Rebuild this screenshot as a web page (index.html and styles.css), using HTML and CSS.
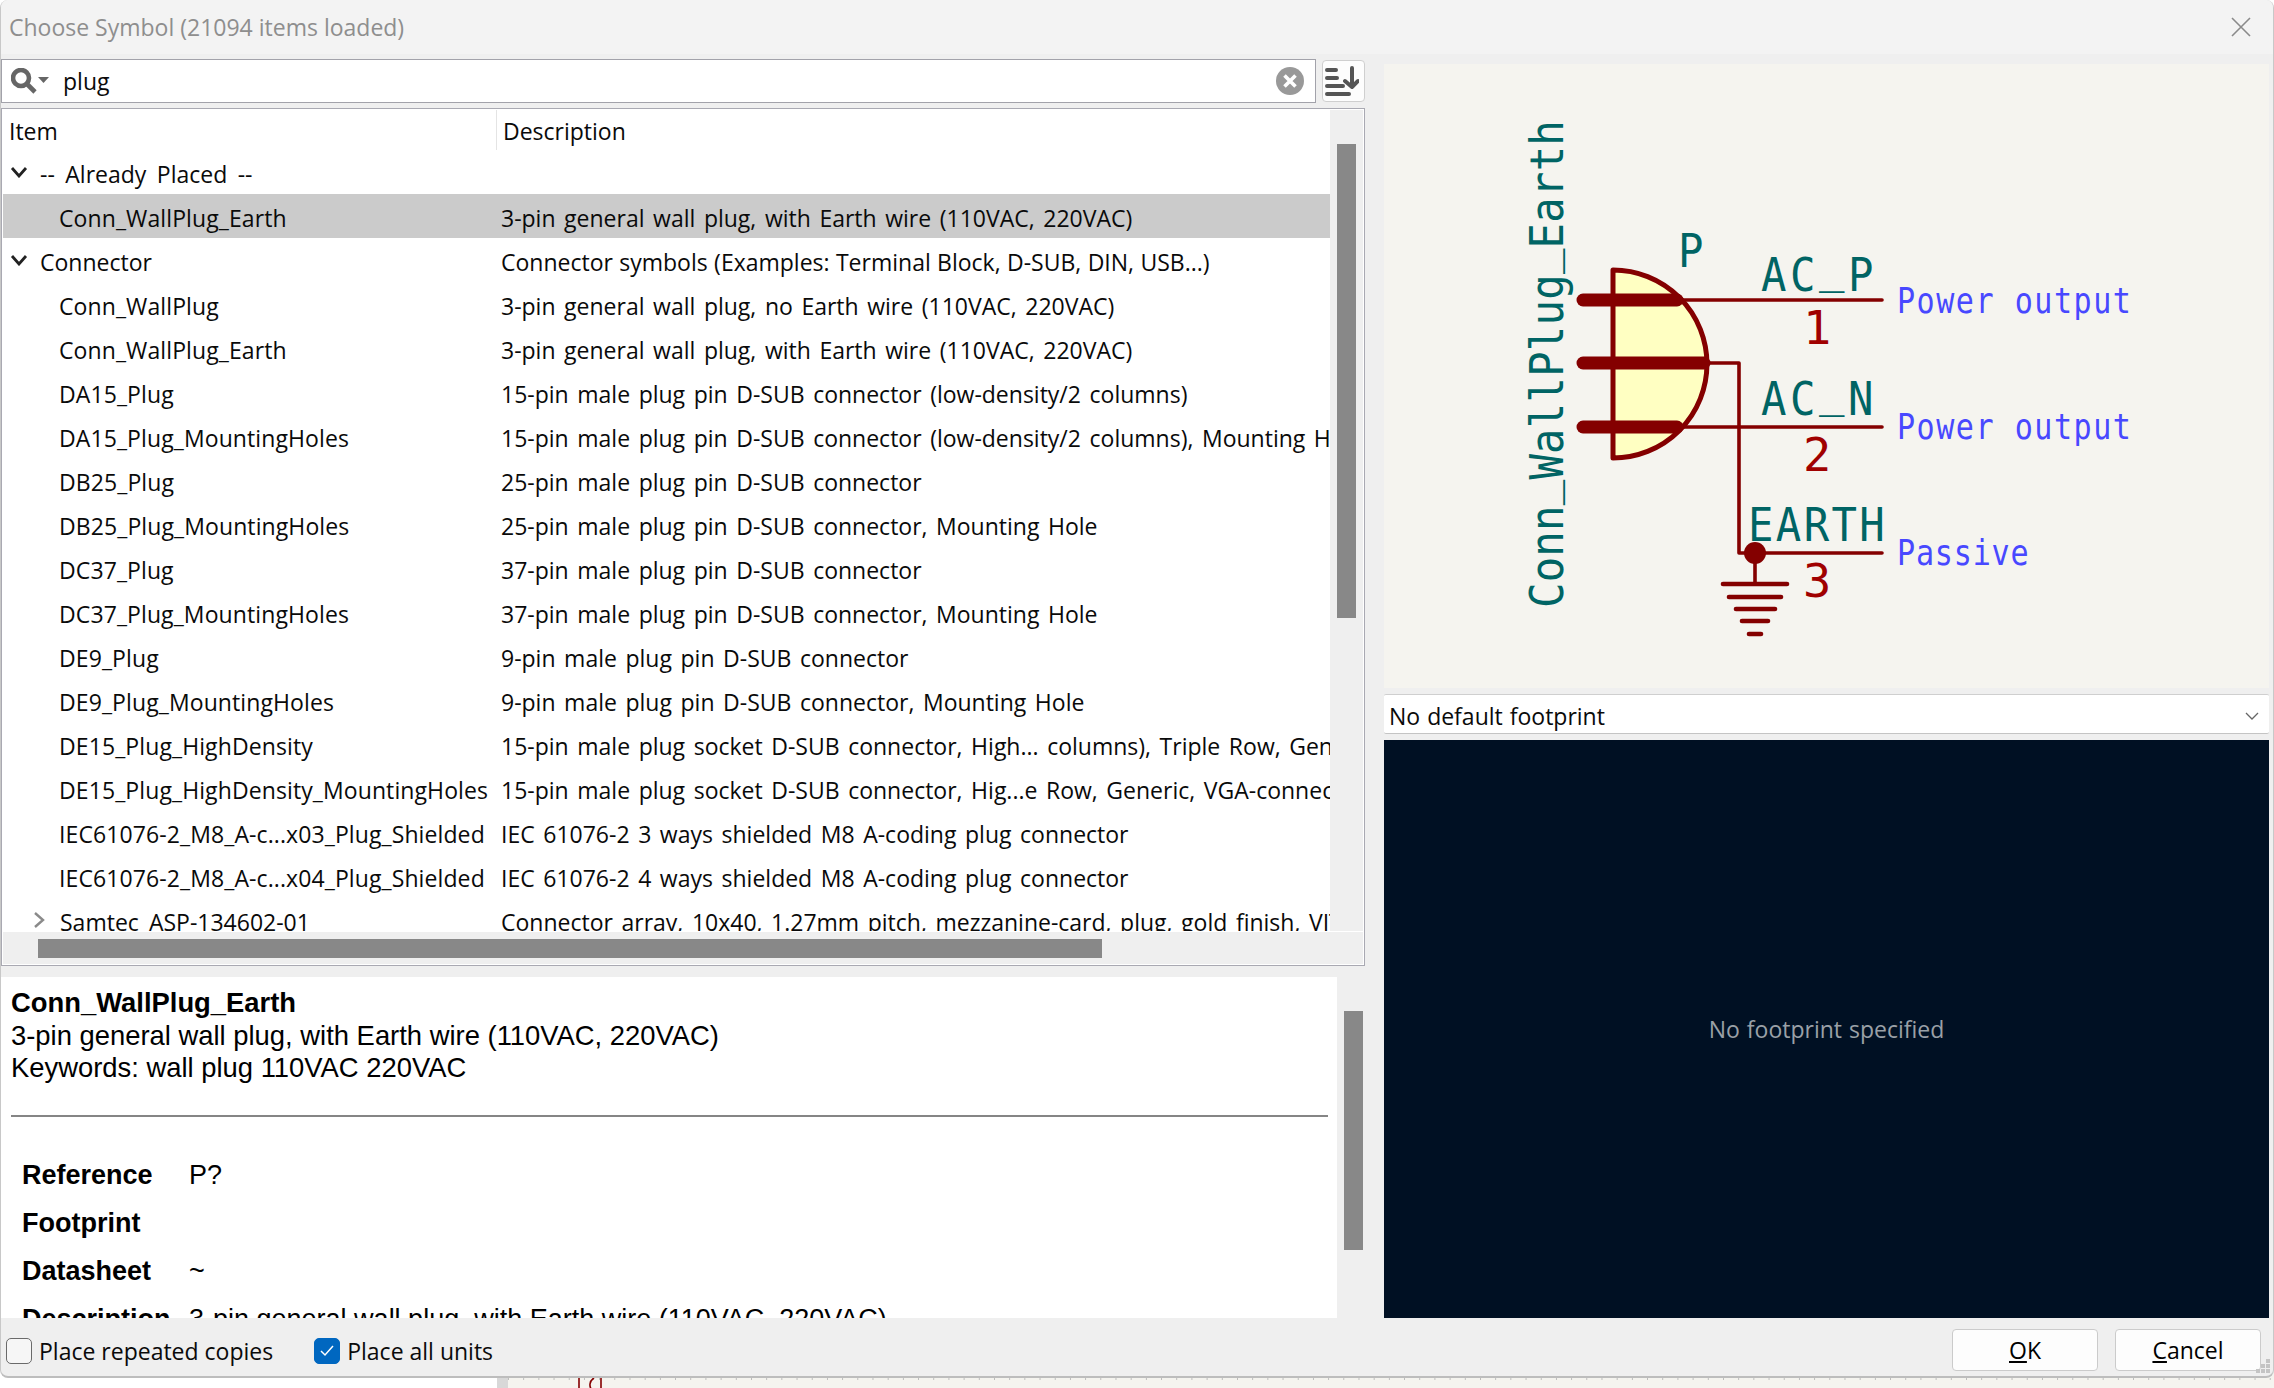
FILE: index.html
```html
<!DOCTYPE html>
<html lang="en">
<head>
<meta charset="utf-8">
<title>Choose Symbol</title>
<link rel="stylesheet" href="styles.css">
</head>
<body>
<div class="dialog">
  <header class="titlebar">
    <span class="title">Choose Symbol (21094 items loaded)</span>
    <svg class="close" width="20" height="20" viewBox="0 0 20 20"><path d="M1 1L19 19M19 1L1 19"/></svg>
  </header>
  <main class="columns">
    <section class="left">
      <div class="search-row">
        <div class="search">
          <svg class="search-icon" width="40" height="26" viewBox="0 0 40 26"><circle cx="10" cy="10" r="8"/><path d="M16 16L24 24"/><polygon points="27,9 38,9 32.500,15"/></svg>
          <span class="search-text">plug</span>
          <svg class="clear" width="28" height="28" viewBox="0 0 28 28"><circle cx="14" cy="14" r="14"/><path d="M8.500 8.500L19.500 19.500M19.500 8.500L8.500 19.500"/></svg>
        </div>
        <button class="sort" type="button">
          <svg width="34" height="30" viewBox="0 0 34 30"><path d="M2 4H11M2 12H12M2 20H18M2 28H24M27 2V21M20 15L27 21L33 15"/></svg>
        </button>
      </div>
      <div class="list">
        <div class="list-top">
          <div class="list-main">
            <div class="list-head"><span class="head-item">Item</span><span class="head-desc">Description</span></div>
            <div class="rows">
              <div class="row"><span class="name d0"><svg class="chev" width="18" height="12" viewBox="0 0 18 12"><path d="M2 2L9 10L16 2"/></svg>-- Already Placed --</span><span class="desc"></span></div>
              <div class="row selected"><span class="name d1">Conn_WallPlug_Earth</span><span class="desc">3-pin general wall plug, with Earth wire (110VAC, 220VAC)</span></div>
              <div class="row"><span class="name d0"><svg class="chev" width="18" height="12" viewBox="0 0 18 12"><path d="M2 2L9 10L16 2"/></svg>Connector</span><span class="desc tight">Connector symbols (Examples: Terminal Block, D-SUB, DIN, USB...)</span></div>
              <div class="row"><span class="name d1">Conn_WallPlug</span><span class="desc">3-pin general wall plug, no Earth wire (110VAC, 220VAC)</span></div>
              <div class="row"><span class="name d1">Conn_WallPlug_Earth</span><span class="desc">3-pin general wall plug, with Earth wire (110VAC, 220VAC)</span></div>
              <div class="row"><span class="name d1">DA15_Plug</span><span class="desc">15-pin male plug pin D-SUB connector (low-density/2 columns)</span></div>
              <div class="row"><span class="name d1">DA15_Plug_MountingHoles</span><span class="desc">15-pin male plug pin D-SUB connector (low-density/2 columns), Mounting Hole</span></div>
              <div class="row"><span class="name d1">DB25_Plug</span><span class="desc">25-pin male plug pin D-SUB connector</span></div>
              <div class="row"><span class="name d1">DB25_Plug_MountingHoles</span><span class="desc">25-pin male plug pin D-SUB connector, Mounting Hole</span></div>
              <div class="row"><span class="name d1">DC37_Plug</span><span class="desc">37-pin male plug pin D-SUB connector</span></div>
              <div class="row"><span class="name d1">DC37_Plug_MountingHoles</span><span class="desc">37-pin male plug pin D-SUB connector, Mounting Hole</span></div>
              <div class="row"><span class="name d1">DE9_Plug</span><span class="desc">9-pin male plug pin D-SUB connector</span></div>
              <div class="row"><span class="name d1">DE9_Plug_MountingHoles</span><span class="desc">9-pin male plug pin D-SUB connector, Mounting Hole</span></div>
              <div class="row"><span class="name d1">DE15_Plug_HighDensity</span><span class="desc">15-pin male plug socket D-SUB connector, High... columns), Triple Row, Generic</span></div>
              <div class="row"><span class="name d1">DE15_Plug_HighDensity_MountingHoles</span><span class="desc">15-pin male plug socket D-SUB connector, Hig...e Row, Generic, VGA-connector</span></div>
              <div class="row"><span class="name d1">IEC61076-2_M8_A-c...x03_Plug_Shielded</span><span class="desc">IEC 61076-2 3 ways shielded M8 A-coding plug connector</span></div>
              <div class="row"><span class="name d1">IEC61076-2_M8_A-c...x04_Plug_Shielded</span><span class="desc">IEC 61076-2 4 ways shielded M8 A-coding plug connector</span></div>
              <div class="row"><span class="name d0b"><svg class="chev-r" width="12" height="18" viewBox="0 0 12 18"><path d="M2 2L10 9L2 16"/></svg>Samtec_ASP-134602-01</span><span class="desc">Connector array, 10x40, 1.27mm pitch, mezzanine-card, plug, gold finish, VITA</span></div>
            </div>
          </div>
          <div class="vscroll"><div class="vthumb"></div></div>
        </div>
        <div class="hscroll"><div class="hthumb"></div></div>
      </div>
      <div class="detail-wrap">
        <div class="detail">
          <div class="detail-title">Conn_WallPlug_Earth</div>
          <div class="detail-line">3-pin general wall plug, with Earth wire (110VAC, 220VAC)</div>
          <div class="detail-line">Keywords: wall plug 110VAC 220VAC</div>
          <hr class="rule">
          <dl class="fields">
            <dt>Reference</dt><dd>P?</dd>
            <dt>Footprint</dt><dd></dd>
            <dt>Datasheet</dt><dd>~</dd>
            <dt>Description</dt><dd>3-pin general wall plug, with Earth wire (110VAC, 220VAC)</dd>
          </dl>
        </div>
        <div class="detail-scroll"><div class="detail-thumb"></div></div>
      </div>
    </section>
    <section class="right">
      <div class="preview">
        <svg class="schematic" width="885" height="624" viewBox="1384 64 885 624">
          <path class="body" d="M1613 270A94 94 0 0 1 1613 458Z"/>
          <g class="thin">
            <path d="M1683 300H1882"/>
            <path d="M1707 363H1739V553H1882"/>
            <path d="M1683 427H1882"/>
            <path d="M1755 553V584"/>
          </g>
          <g class="thick">
            <path d="M1583 300H1677"/>
            <path d="M1583 363H1704"/>
            <path d="M1583 427H1677"/>
          </g>
          <ellipse class="junction" cx="1755" cy="553" rx="11" ry="11"/>
          <g class="gnd">
            <path d="M1723 584H1787"/>
            <path d="M1729 597H1781"/>
            <path d="M1736 609H1775"/>
            <path d="M1742 621H1768"/>
            <path d="M1749 634H1761"/>
          </g>
          <text class="ref-name" transform="translate(1563 608) rotate(-90) scale(.9 1)" textLength="542" lengthAdjust="spacing">Conn<tspan dy="-9">_</tspan><tspan dy="9">WallPlug</tspan><tspan dy="-9">_</tspan><tspan dy="9">Earth</tspan></text>
          <text class="sch-teal" transform="translate(1678 267) scale(.9 1)">P</text>
          <text class="sch-teal" transform="translate(1761 291) scale(.9 1)" textLength="125" lengthAdjust="spacing">AC<tspan dy="-9">_</tspan><tspan dy="9">P</tspan></text>
          <text class="sch-teal" transform="translate(1761 415) scale(.9 1)" textLength="125" lengthAdjust="spacing">AC<tspan dy="-9">_</tspan><tspan dy="9">N</tspan></text>
          <text class="sch-teal" transform="translate(1748 541) scale(.9 1)" textLength="152" lengthAdjust="spacing">EARTH</text>
          <text class="sch-red" x="1803" y="344">1</text>
          <text class="sch-red" x="1803" y="471">2</text>
          <text class="sch-red" x="1803" y="597">3</text>
          <text class="sch-blue" transform="translate(1897 313) scale(.86 1)" textLength="272" lengthAdjust="spacing">Power output</text>
          <text class="sch-blue" transform="translate(1897 439) scale(.86 1)" textLength="272" lengthAdjust="spacing">Power output</text>
          <text class="sch-blue" transform="translate(1897 565) scale(.86 1)" textLength="153" lengthAdjust="spacing">Passive</text>
        </svg>
      </div>
      <div class="combo">
        <span>No default footprint</span>
        <svg class="combo-chev" width="14" height="8" viewBox="0 0 14 8"><path d="M1 1L7 7L13 1"/></svg>
      </div>
      <div class="footprint">No footprint specified</div>
    </section>
  </main>
  <footer class="bottom">
    <label class="check"><span class="box"></span>Place repeated copies</label>
    <label class="check second"><span class="box on"><svg width="16" height="14" viewBox="0 0 16 14"><path d="M2 7L6 11L14 2"/></svg></span>Place all units</label>
    <div class="spacer"></div>
    <button class="btn" type="button"><u>O</u>K</button>
    <button class="btn" type="button"><u>C</u>ancel</button>
    <svg class="grip" width="16" height="16" viewBox="0 0 16 16"><path d="M11 1h4v4h-4zM11 6h4v4h-4zM6 6h4v4h-4zM11 11h4v4h-4zM6 11h4v4h-4zM1 11h4v4h-4z"/></svg>
  </footer>
</div>
<div class="behind">
  <div class="behind-white"></div>
  <div class="behind-gutter"></div>
  <div class="behind-sheet">
    <svg class="behind-symbol" width="26" height="12" viewBox="0 0 26 12"><path d="M2 0V12M24 0V12M17 0C12 3 12 9 15 12"/></svg>
  </div>
</div>
</body>
</html>
```
FILE: styles.css
```css
* { box-sizing: border-box; }
html, body { margin: 0; padding: 0; }
body {
  width: 2274px;
  height: 1388px;
  overflow: hidden;
  background: #ffffff;
  font-family: "Open Sans", "Noto Sans", sans-serif;
  font-size: 23px;
  color: #0a0a0a;
}
.dialog {
  position: relative;
  z-index: 1;
  width: 2274px;
  height: 1378px;
  display: flex;
  flex-direction: column;
  background: #efefef;
  border-left: 1px solid #c8c8c8;
  border-right: 1px solid #c8c8c8;
  border-bottom: 2px solid #bdbdbd;
  border-radius: 8px;
  overflow: hidden;
}
.titlebar {
  height: 54px;
  flex: none;
  display: flex;
  align-items: center;
  justify-content: space-between;
  padding: 0 22px 0 8px;
  background: #f3f3f3;
  color: #8e8e8e;
}
.close path { stroke: #8a8a8a; stroke-width: 1.6; fill: none; }
.columns {
  flex: none;
  height: 1264px;
  display: flex;
}
.left {
  width: 1364px;
  flex: none;
  display: flex;
  flex-direction: column;
  padding-top: 5px;
}
.right {
  width: 885px;
  margin-left: 19px;
  flex: none;
  display: flex;
  flex-direction: column;
  padding-top: 10px;
}

/* search */
.search-row { display: flex; height: 44px; flex: none; }
.search {
  width: 1315px;
  height: 44px;
  display: flex;
  align-items: center;
  background: #fff;
  border: 1px solid #a2a2aa;
  padding: 0 11px 0 9px;
}
.search-icon circle, .search-icon path { fill: none; stroke: #666; stroke-width: 4.6; }
.search-icon polygon { fill: #666; }
.search-icon { flex: none; }
.search-text { margin-left: 12px; flex: 1; }
.clear circle { fill: #999; }
.clear path { stroke: #fff; stroke-width: 3.6; fill: none; }
.sort {
  width: 43px;
  height: 42px;
  margin-left: 6px;
  margin-top: 1px;
  padding: 0 3px 0 0;
  display: flex;
  align-items: center;
  justify-content: center;
  background: #fdfdfd;
  border: 1px solid #cfcfcf;
  border-radius: 4px;
}
.sort path { fill: none; stroke: #555; stroke-width: 4; stroke-linecap: round; stroke-linejoin: round; }

/* list */
.list {
  width: 1364px;
  height: 858px;
  flex: none;
  margin-top: 5px;
  display: flex;
  flex-direction: column;
  background: #efefef;
  border: 1px solid #a9a9b2;
  padding: 1px;
  box-shadow: inset 0 0 0 1px #fff;
}
.list-top { display: flex; height: 821px; flex: none; }
.list-main { width: 1327px; flex: none; background: #fff; display: flex; flex-direction: column; overflow: hidden; }
.list-head { height: 40px; flex: none; display: flex; align-items: center; }
.head-item { width: 494px; flex: none; padding-left: 6px; border-right: 1px solid #e4e4e4; height: 40px; line-height: 43px; }
.head-desc { padding-left: 6px; line-height: 43px; height: 40px; }
.rows { height: 781px; overflow: hidden; }
.row {
  height: 44px;
  display: flex;
  align-items: center;
  white-space: nowrap;
  line-height: 44px;
  padding-top: 3px;
}
.row.selected { background: #cbcbcb; }
.name { width: 498px; flex: none; display: flex; align-items: center; }
.name.d0 { padding-left: 7px; word-spacing: 4.5px; }
.name.d0b { padding-left: 30px; }
.name.d1 { padding-left: 56px; letter-spacing: .1px; }
.desc { flex: 1; min-width: 0; overflow: hidden; word-spacing: 2.6px; }
.desc.tight { word-spacing: .4px; }
.chev { margin-right: 12px; flex: none; position: relative; top: -2px; }
.chev path { fill: none; stroke: #222; stroke-width: 2.8; }
.chev-r { margin-right: 15px; flex: none; position: relative; top: -2px; }
.chev-r path { fill: none; stroke: #8a8a8a; stroke-width: 2.4; }
.vscroll { flex: 1; padding: 34px 0 0 7px; }
.vthumb { width: 19px; height: 474px; background: #888; }
.hscroll { flex: 1; border-top: 1px solid #fff; padding: 7px 0 0 35px; }
.hthumb { width: 1064px; height: 19px; background: #888; }

/* details */
.detail-wrap { display: flex; height: 341px; flex: none; margin-top: 11px; }
.detail {
  width: 1336px;
  flex: none;
  background: #fff;
  overflow: hidden;
  padding: 10px 9px 0 10px;
  font-family: "Liberation Sans", Arial, sans-serif;
  font-size: 27.4px;
  line-height: 32px;
  color: #000;
  white-space: nowrap;
}
.detail-title { font-weight: 700; }
.detail-line { position: relative; top: 1px; }
.rule { margin: 32px 0 33px; border: 0; height: 2px; background: #858585; }
.fields { margin: 0; display: grid; grid-template-columns: 167px 1fr; grid-auto-rows: 48px; padding: 1px 0 0 11px; align-items: center; font-size: 27px; }
.fields dt { font-weight: 700; }
.fields dd { margin: 0; }
.detail-scroll { flex: 1; padding: 34px 0 0 7px; }
.detail-thumb { width: 19px; height: 239px; background: #888; }

/* preview */
.preview { height: 624px; flex: none; background: #f5f4ef; }
.schematic { display: block; }
.body { fill: #ffffc2; stroke: #840000; stroke-width: 5; stroke-linejoin: round; }
.thin path { fill: none; stroke: #840000; stroke-width: 3.6; stroke-linecap: round; stroke-linejoin: round; }
.thick path { fill: none; stroke: #840000; stroke-width: 13; stroke-linecap: round; }
.junction { fill: #840000; }
.gnd path { fill: none; stroke: #840000; stroke-width: 4.6; stroke-linecap: round; }
.schematic text { font-family: "DejaVu Sans Mono", monospace; }
.ref-name { font-size: 47px; fill: #006464; }
.sch-teal { font-size: 47px; fill: #006464; }
.sch-red { font-size: 47px; fill: #a00000; }
.sch-blue { font-size: 35px; fill: #4848ff; }

.combo {
  height: 40px;
  flex: none;
  margin-top: 6px;
  display: flex;
  align-items: center;
  justify-content: space-between;
  background: #fff;
  border-top: 1px solid #cfcfcf;
  border-bottom: 1px solid #c4c4c4;
  padding: 4px 10px 0 5px;
  border-radius: 2px;
  word-spacing: 1px;
}
.combo-chev path { fill: none; stroke: #666; stroke-width: 1.3; }
.footprint {
  flex: 1;
  margin-top: 6px;
  display: flex;
  align-items: center;
  justify-content: center;
  background: #001023;
  color: #9aa0a7;
  word-spacing: 1px;
}

/* footer */
.bottom {
  flex: 1;
  display: flex;
  align-items: flex-start;
  padding: 11px 12px 0 5px;
  position: relative;
}
.check { display: flex; align-items: center; height: 44px; }
.box {
  width: 26px;
  height: 26px;
  margin-right: 7px;
  border: 1.5px solid #6a6a6a;
  border-radius: 5px;
  background: #f6f6f6;
  display: flex;
  align-items: center;
  justify-content: center;
}
.box.on { background: #0067c0; border-color: #0067c0; }
.box.on path { fill: none; stroke: #fff; stroke-width: 1.5; }
.second { margin-left: 41px; }
.spacer { flex: 1; }
.btn {
  width: 146px;
  height: 42px;
  margin-left: 17px;
  padding: 0;
  background: #fdfdfd;
  border: 1px solid #cbcbcb;
  border-radius: 4px;
  font: inherit;
  color: #000;
}
.grip { position: absolute; right: 2px; bottom: 2px; }
.grip path { fill: #c4c4c4; }

/* window behind the dialog */
.behind { display: flex; height: 22px; margin-top: -12px; }
.behind-white { width: 497px; background: #fff; }
.behind-gutter { width: 11px; background: #d8d8d8; }
.behind-sheet {
  flex: 1;
  background: #f5f4ef linear-gradient(90deg, #bbb 1px, transparent 1px) 0 12px / 15.2px 2px repeat-x;
  padding: 12px 0 0 69px;
}
.behind-symbol { display: block; }
.behind-symbol path { fill: none; stroke: #840000; stroke-width: 1.6; }
```
